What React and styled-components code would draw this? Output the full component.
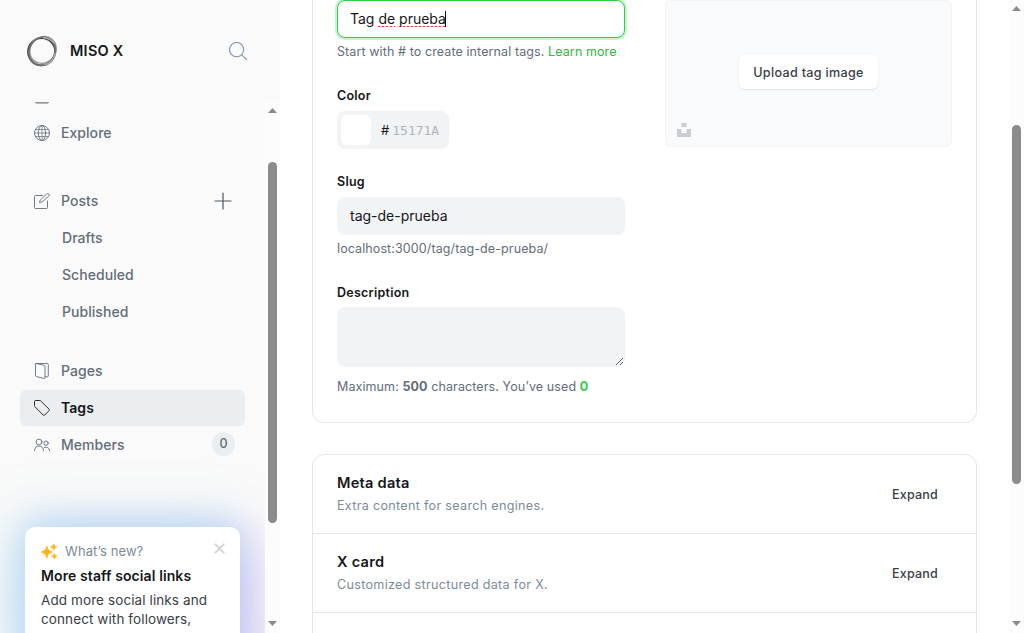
import React from "react";
import styled, { createGlobalStyle, css } from "styled-components";

const Global = createGlobalStyle`
  *, *::before, *::after { box-sizing: border-box; }
  html, body { margin: 0; padding: 0; overflow: hidden; background: #fff; }
  body {
    font-family: Inter, "Liberation Sans", sans-serif;
    letter-spacing: 0.1px;
    color: #15171a;
  }
`;

const Page = styled.div`
  display: flex;
  width: 1024px;
  height: 633px;
  overflow: hidden;
  background: #fff;
`;

/* ---------- scrollbars ---------- */
const Track = styled.div`
  display: flex;
  flex-direction: column;
  align-items: center;
  flex: none;
  width: 15px;
  height: 100%;
  background: #fcfcfc;
  padding: ${(p) => p.$padding};
`;
const Thumb = styled.div`
  width: 9px;
  height: ${(p) => p.$height}px;
  margin-top: ${(p) => p.$offset}px;
  border-radius: 5px;
  background: #8b8b8b;
`;
const Arrow = styled.svg`
  display: block;
  flex: none;
  width: 9px;
  height: 5px;
  fill: #8b8b8b;
  ${(p) => p.$end && css`margin-top: auto;`}
`;

function Scrollbar({ padding, offset, height }) {
  return (
    <Track $padding={padding}>
      <Arrow viewBox="0 0 9 5"><path d="M0 5 L4.5 0 L9 5Z" /></Arrow>
      <Thumb $offset={offset} $height={height} />
      <Arrow $end viewBox="0 0 9 5"><path d="M0 0 L4.5 5 L9 0Z" /></Arrow>
    </Track>
  );
}

/* ---------- sidebar ---------- */
const Sidebar = styled.aside`
  display: flex;
  flex-direction: column;
  flex: none;
  width: 280px;
  height: 633px;
  background: #fafafa;
`;
const SiteHeader = styled.header`
  display: flex;
  align-items: center;
  flex: none;
  height: 102px;
  padding: 0 32px 0 26px;
`;
const SiteLogo = styled.svg`
  width: 32px;
  height: 32px;
`;
const SiteName = styled.div`
  flex: 1;
  margin-left: 12px;
  font-size: 14.5px;
  font-weight: 600;
  line-height: 20px;
  letter-spacing: 0.25px;
`;
const SidebarBody = styled.div`
  display: flex;
  flex: 1;
  min-height: 0;
`;
const SidebarScroll = styled.div`
  display: flex;
  flex-direction: column;
  width: 265px;
  overflow: hidden;
`;
const Nav = styled.nav`
  display: flex;
  flex-direction: column;
  gap: 1px;
  padding: 0 20px;
  flex: none;
`;
const Clipped = styled.div`
  height: 12px;
  padding-left: 14px;
  overflow: hidden;
`;
const NavItem = styled.a`
  display: flex;
  align-items: center;
  height: 36px;
  padding: 0 10px 0 ${(p) => (p.$sub ? 42 : 14)}px;
  margin-top: ${(p) => p.$gap || 0}px;
  border-radius: 6px;
  font-size: 14px;
  font-weight: ${(p) => (p.$active ? 600 : 500)};
  line-height: 20px;
  letter-spacing: 0.05px;
  color: ${(p) => (p.$active ? "#15171a" : "#626d79")};
  background: ${(p) => (p.$active ? "#ebeef0" : "transparent")};
`;
const NavText = styled.span`
  flex: 1;
`;
const NavIcon = styled.svg`
  flex: none;
  width: 16px;
  height: 16px;
  margin-right: 11px;
  fill: none;
  stroke: currentColor;
  stroke-width: 0.9;
  stroke-linecap: round;
  stroke-linejoin: round;
`;
const PlusIcon = styled(NavIcon)`
  width: 18px;
  height: 18px;
  margin-right: 3px;
  stroke: #4d5661;
  stroke-width: 1.2;
`;
const SearchIcon = styled.svg`
  width: 19px;
  height: 19px;
  fill: none;
  stroke: #8091a5;
  stroke-width: 1.1;
  stroke-linecap: round;
`;
const Count = styled.span`
  display: flex;
  align-items: center;
  justify-content: center;
  width: 23px;
  height: 24px;
  margin-bottom: 2px;
  border-radius: 12px;
  background: #ebeef0;
  font-size: 12.5px;
  font-weight: 500;
`;

/* ---------- what's new ---------- */
const Toast = styled.section`
  flex: none;
  width: 215px;
  height: 150px;
  margin: 64px 0 0 25px;
  padding: 14px 16px;
  border-radius: 10px;
  background: #fff;
  box-shadow:
    -12px 0 56px 0 rgba(165, 228, 242, 0.5),
    0 -3px 34px 0 rgba(130, 175, 240, 0.45),
    16px 16px 54px 0 rgba(210, 155, 245, 0.5);
`;
const ToastHead = styled.div`
  display: flex;
  align-items: center;
  height: 20px;
  font-size: 13px;
  line-height: 20px;
  color: #7c8b9a;
`;
const Sparkle = styled.svg`
  width: 17px;
  height: 17px;
  margin-right: 7px;
  fill: #ffb41f;
  stroke: #ffb41f;
  stroke-width: 0.6;
  stroke-linejoin: round;
`;
const ToastLabel = styled.span`
  flex: 1;
`;
const Close = styled.svg`
  width: 11px;
  height: 11px;
  margin: -6px -1px 0 0;
  stroke: #d3d3d3;
  stroke-width: 1.8;
`;
const ToastTitle = styled.div`
  margin-top: 5px;
  font-size: 14px;
  font-weight: 600;
  line-height: 20px;
`;
const ToastText = styled.div`
  margin-top: 5px;
  font-size: 13.5px;
  line-height: 19px;
  color: #394047;
  white-space: nowrap;
`;

/* ---------- main ---------- */
const Main = styled.main`
  display: flex;
  flex-direction: column;
  flex: 1;
  padding: 0 32px;
  min-width: 0;
`;
const FormCard = styled.section`
  display: flex;
  justify-content: space-between;
  flex: none;
  height: 423px;
  padding: 0 24px;
  border: 1px solid #e3e6ea;
  border-top: 0;
  border-radius: 0 0 12px 12px;
`;
const Fields = styled.div`
  display: flex;
  flex-direction: column;
  width: 288px;
`;
const field = css`
  display: flex;
  align-items: center;
  border-radius: 8px;
  background: #f1f3f4;
`;
const Input = styled.div`
  ${field}
  flex: none;
  height: 38px;
  padding: 0 12px;
  border: 1px solid #f1f3f4;
  font-size: 14px;
  line-height: 20px;
  letter-spacing: 0;
  ${(p) => p.$focused && css`
    background: #fff;
    border-color: #30cf43;
    box-shadow: 0 0 0 2px rgba(48, 207, 67, 0.25);
  `}
`;
const Misspelled = styled.span`
  padding-bottom: 1px;
  background-image: linear-gradient(90deg, #ff2a2a 50%, #ffc4c4 50%);
  background-repeat: repeat-x;
  background-size: 4px 1px;
  background-position: 0 calc(100% - 1px);
`;
const Caret = styled.span`
  width: 1px;
  height: 16px;
  margin-left: -1px;
  background: #000;
`;
const Help = styled.p`
  flex: none;
  margin: ${(p) => p.$gap || 4}px 0 0;
  font-size: 12.5px;
  line-height: 20px;
  color: #626d79;
  white-space: nowrap;
`;
const Green = styled.span`
  color: #30b83f;
`;
const Bold = styled.b`
  font-weight: 700;
  color: ${(p) => (p.$green ? "#30cf43" : "inherit")};
`;
const Label = styled.label`
  margin: ${(p) => p.$gap}px 0 ${(p) => p.$below || 5}px;
  font-size: 12.5px;
  font-weight: 600;
  line-height: 20px;
  letter-spacing: 0.25px;
`;
const ColorField = styled.div`
  ${field}
  width: 112px;
  height: 38px;
  padding-left: 4px;
  font-size: 13px;
  letter-spacing: 0;
`;
const Swatch = styled.span`
  width: 30px;
  height: 30px;
  border-radius: 6px;
  background: #fff;
`;
const Hash = styled.span`
  margin-left: 10px;
`;
const Hex = styled.span`
  margin-left: 3px;
  font-family: "DejaVu Sans Mono", "Liberation Mono", monospace;
  color: #aeb7c1;
`;
const TextArea = styled.textarea`
  display: block;
  width: 288px;
  height: 60px;
  margin: 0;
  padding: 8px 12px;
  border: 1px solid #f1f3f4;
  border-radius: 8px;
  background: #f1f3f4;
  outline: none;
  resize: vertical;
`;
const Upload = styled.div`
  display: grid;
  grid-template-rows: 1fr auto 1fr;
  justify-items: center;
  width: 287px;
  height: 147px;
  padding: 0 11px 9px;
  border: 1px solid #f1f3f4;
  border-radius: 6px;
  background: #f9fafb;
`;
const UploadButton = styled.div`
  grid-row: 2;
  display: flex;
  align-items: center;
  height: 34px;
  margin: 7px 0 1px;
  padding: 0 14px;
  border-radius: 6px;
  background: #fff;
  box-shadow: 0 1px 2px rgba(0, 0, 0, 0.1);
  font-size: 12.6px;
  font-weight: 500;
  letter-spacing: 0.3px;
  color: #394047;
`;
const Unsplash = styled.svg`
  grid-row: 3;
  align-self: end;
  justify-self: start;
  width: 14px;
  height: 14px;
  fill: #c8ced3;
`;
const Panels = styled.section`
  flex: none;
  margin-top: 31px;
  height: 300px;
  border: 1px solid #e3e6ea;
  border-radius: 12px;
`;
const Panel = styled.div`
  display: flex;
  align-items: center;
  justify-content: space-between;
  height: 79px;
  padding: 0 38px 0 24px;
  border-bottom: 1px solid #e3e6ea;
`;
const PanelTitle = styled.h4`
  margin: 0;
  font-size: 14.6px;
  font-weight: 600;
  line-height: 20px;
  letter-spacing: 0.25px;
`;
const PanelText = styled.p`
  margin: 3px 0 0;
  font-size: 12.6px;
  line-height: 20px;
  letter-spacing: 0.3px;
  color: #7c8b9a;
`;
const Expand = styled.span`
  font-size: 12.5px;
  font-weight: 500;
  letter-spacing: 0.2px;
  color: #394047;
`;

export default function App() {
  return (
    <Page>
      <Global />
      <Sidebar>
        <SiteHeader>
          <SiteLogo viewBox="0 0 32 32" fill="none">
            <circle cx="15.5" cy="16.8" r="13.6" stroke="#444" strokeWidth="1.6" />
            <ellipse cx="17" cy="14.9" rx="14" ry="12.6" transform="rotate(-50 17 14.9)" stroke="#999" strokeWidth="1.4" />
            <ellipse cx="16" cy="16.4" rx="14.6" ry="12.6" transform="rotate(-62 16 16.4)" stroke="#666" strokeWidth="1.3" />
            <ellipse cx="16.4" cy="16" rx="13.2" ry="14.2" transform="rotate(20 16.4 16)" stroke="#777" strokeWidth="1.2" />
            <path d="M17 2.6C21.5 2.5 26.5 5 28.4 8.6M29.3 18.5C28 24.5 24 28.5 18.5 30" stroke="#a5a5a5" strokeWidth="1.8" />
          </SiteLogo>
          <SiteName>MISO X</SiteName>
          <SearchIcon viewBox="0 0 19 19">
            <circle cx="7.6" cy="7.6" r="7.1" />
            <path d="M12.8 12.8 L17.6 17.6" />
          </SearchIcon>
        </SiteHeader>
        <SidebarBody>
          <SidebarScroll>
            <Nav>
              <Clipped>
                <svg width="16" height="2" viewBox="0 0 16 2" display="block">
                  <path d="M1 0.5H15" stroke="#8f97a3" strokeWidth="1" />
                  <path d="M2 1.5H14" stroke="#b0b6bf" strokeWidth="1" />
                </svg>
              </Clipped>
              <NavItem>
                <NavIcon viewBox="0 0 16 16">
                  <circle cx="8" cy="8" r="7.5" />
                  <ellipse cx="8" cy="8" rx="3.6" ry="7.5" />
                  <path d="M.5 8h15M1.5 4.5h13M1.5 11.5h13M8 .5v15" strokeWidth="0.7" />
                </NavIcon>
                <NavText>Explore</NavText>
              </NavItem>
              <NavItem $gap={31}>
                <NavIcon viewBox="0 0 16 16">
                  <path d="M8.5 2.5H1.5a1 1 0 0 0-1 1v11a1 1 0 0 0 1 1h11a1 1 0 0 0 1-1V8" />
                  <path d="M7.8 8.9l-2.3.6.6-2.3L12.8.8a1.2 1.2 0 0 1 1.7 0l.6.5a1.2 1.2 0 0 1 0 1.5z" />
                </NavIcon>
                <NavText>Posts</NavText>
                <PlusIcon viewBox="0 0 18 18">
                  <path d="M9 1v16M1 9h16" />
                </PlusIcon>
              </NavItem>
              <NavItem $sub>Drafts</NavItem>
              <NavItem $sub>Scheduled</NavItem>
              <NavItem $sub>Published</NavItem>
              <NavItem $gap={22}>
                <NavIcon viewBox="0 0 16 16">
                  <path d="M2.2.5h11.1a1 1 0 0 1 1 1v11.3a1 1 0 0 1-1 1h-2.2" />
                  <path d="M2.2.5l7.6 1.8a1.3 1.3 0 0 1 1.2 1.3v10.8a1 1 0 0 1-1.3 1L2.5 13.6a1.2 1.2 0 0 1-1-1.2V1.2A.7.7 0 0 1 2.2.5z" />
                </NavIcon>
                <NavText>Pages</NavText>
              </NavItem>
              <NavItem $active>
                <NavIcon viewBox="0 0 16 16">
                  <path d="M.5 1.5a1 1 0 0 1 1-1h4.4a1 1 0 0 1 .7.3l8.5 8.4a1 1 0 0 1 0 1.4l-4.5 4.5a1 1 0 0 1-1.4 0L.8 6.6a1 1 0 0 1-.3-.7z" />
                </NavIcon>
                <NavText>Tags</NavText>
              </NavItem>
              <NavItem>
                <NavIcon viewBox="0 0 16 16">
                  <circle cx="5" cy="5" r="2.9" />
                  <circle cx="12" cy="6.1" r="2.2" />
                  <path d="M.5 13.7c0-2.8 1.9-4.6 4.5-4.6s4.5 1.8 4.5 4.6M10.2 10.5c2.9-1.2 5.3.3 5.3 3.2" />
                </NavIcon>
                <NavText>Members</NavText>
                <Count>0</Count>
              </NavItem>
            </Nav>
            <Toast>
              <ToastHead>
                <Sparkle viewBox="0 0 17 17">
                  <path d="M5.8 3C7 6.8 7.8 7.7 11.6 9.1 7.8 10.5 7 11.4 5.8 15.2 4.6 11.4 3.8 10.5 0 9.1 3.8 7.7 4.6 6.8 5.8 3Z" />
                  <path d="M12.7.8C13.4 2.8 13.9 3.3 15.9 4 13.9 4.7 13.4 5.2 12.7 7.2 12 5.2 11.5 4.7 9.5 4 11.5 3.3 12 2.8 12.7.8Z" />
                  <path d="M13.4 10.5C14 12.2 14.4 12.6 16.1 13.2 14.4 13.8 14 14.2 13.4 15.9 12.8 14.2 12.4 13.8 10.7 13.2 12.4 12.6 12.8 12.2 13.4 10.5Z" />
                </Sparkle>
                <ToastLabel>What’s new?</ToastLabel>
                <Close viewBox="0 0 11 11"><path d="M.8.8l9.4 9.4M10.2.8L.8 10.2" /></Close>
              </ToastHead>
              <ToastTitle>More staff social links</ToastTitle>
              <ToastText>
                Add more social links and<br />connect with followers,<br />wherever they are
              </ToastText>
            </Toast>
          </SidebarScroll>
          <Scrollbar padding="6px 0 7px" offset={49} height={361} />
        </SidebarBody>
      </Sidebar>

      <Main>
        <FormCard>
          <Fields>
            <Input $focused>
              <span>Tag <Misspelled>de</Misspelled> <Misspelled>prueba</Misspelled></span>
              <Caret />
            </Input>
            <Help>Start with # to create internal tags. <Green>Learn more</Green></Help>
            <Label $gap={24}>Color</Label>
            <ColorField>
              <Swatch />
              <Hash>#</Hash>
              <Hex>15171A</Hex>
            </ColorField>
            <Label $gap={23}>Slug</Label>
            <Input>tag-de-prueba</Input>
            <Help>localhost:3000/tag/tag-de-prueba/</Help>
            <Label $gap={24} $below={4}>Description</Label>
            <TextArea />
            <Help $gap={10}>
              Maximum: <Bold>500</Bold> characters. You’ve used <Bold $green>0</Bold>
            </Help>
          </Fields>
          <Upload>
            <UploadButton>Upload tag image</UploadButton>
            <Unsplash viewBox="0 0 14 14">
              <path d="M4.4 0h5.2v4H4.4zM0 6.1h4.4V10h5.2V6.1H14V14H0z" />
            </Unsplash>
          </Upload>
        </FormCard>
        <Panels>
          <Panel>
            <div>
              <PanelTitle>Meta data</PanelTitle>
              <PanelText>Extra content for search engines.</PanelText>
            </div>
            <Expand>Expand</Expand>
          </Panel>
          <Panel>
            <div>
              <PanelTitle>X card</PanelTitle>
              <PanelText>Customized structured data for X.</PanelText>
            </div>
            <Expand>Expand</Expand>
          </Panel>
        </Panels>
      </Main>
      <Scrollbar padding="6px 0 7px" offset={114} height={359} />
    </Page>
  );
}
